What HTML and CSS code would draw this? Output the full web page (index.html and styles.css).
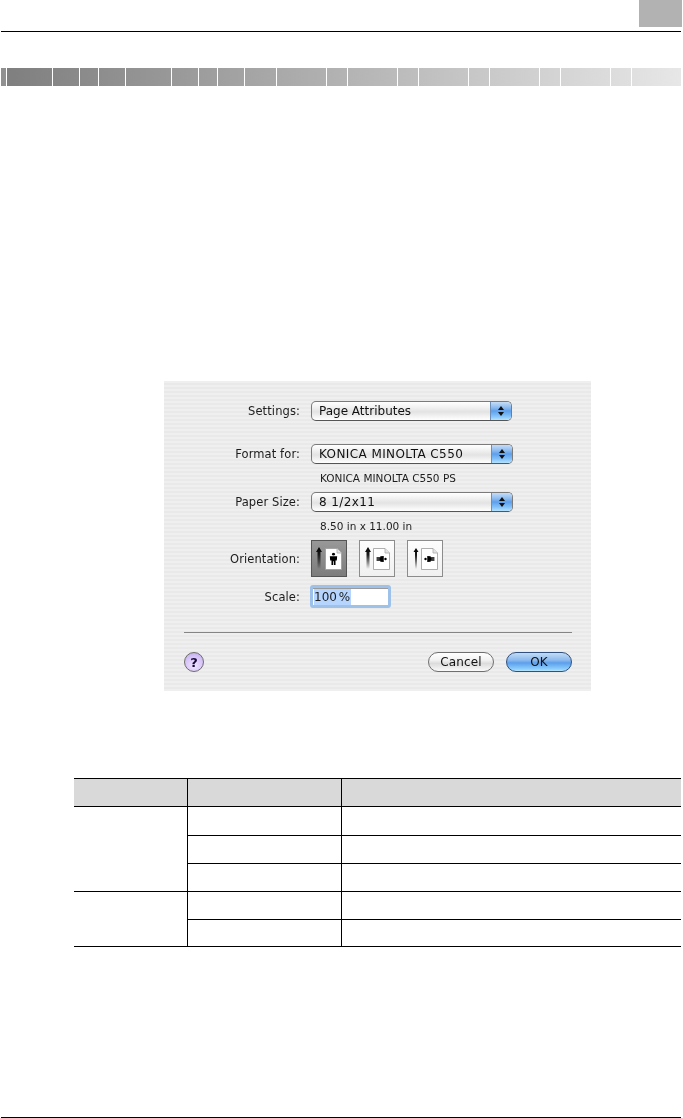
FILE: index.html

```html
<!DOCTYPE html>
<html lang="en">
<head>
  <meta charset="UTF-8">
  <meta name="viewport" content="width=device-width, initial-scale=1.0">
  <title>Page Attributes</title>
  <link rel="stylesheet" href="styles.css">
</head>
<body>
  <!-- shared shapes for the orientation buttons -->
  <svg class="defs" width="0" height="0" aria-hidden="true">
    <defs>
      <linearGradient id="arrow-fade" x1="0" y1="0" x2="0" y2="1">
        <stop offset="0" stop-color="#000"/>
        <stop offset="0.35" stop-color="#1a1a1a"/>
        <stop offset="1" stop-color="#000" stop-opacity="0"/>
      </linearGradient>
      <symbol id="page" viewBox="0 0 36 37">
        <path d="M14.5 8.5H26L30.5 13V29.5H14.5Z" fill="#fff" stroke="#9a9a9a" stroke-width="0.8"/>
        <path d="M26 8.5V13H30.5" fill="#e4e4e4" stroke="#a8a8a8" stroke-width="0.8"/>
      </symbol>
      <symbol id="person" viewBox="0 0 12 14">
        <circle cx="6" cy="1.7" r="1.6" fill="#000"/>
        <path d="M2 4H10L9.6 8.6H8.2V13.6H6.4V9.5H5.6V13.6H3.8V8.6H2.4Z" fill="#000"/>
      </symbol>
    </defs>
  </svg>

  <header class="top-head">
    <div class="chapter-tab"></div>
  </header>

  <!-- Stepped grey band -->
  <div class="band">
    <i></i><i></i><i></i><i></i><i></i><i></i><i></i>
    <i></i><i></i><i></i><i></i><i></i><i></i><i></i>
    <i></i><i></i><i></i><i></i><i></i><i></i><i></i>
  </div>

  <!-- Page setup dialog -->
  <div class="dialog">
    <div class="row row-settings">
      <span class="row-label">Settings:</span>
      <div class="popup popup-short">
        <span class="popup-text">Page Attributes</span>
        <span class="stepper"><b class="tri-up"></b><b class="tri-down"></b></span>
      </div>
    </div>

    <div class="row row-format">
      <span class="row-label">Format for:</span>
      <div class="popup">
        <span class="popup-text popup-caps">KONICA MINOLTA C550</span>
        <span class="stepper"><b class="tri-up"></b><b class="tri-down"></b></span>
      </div>
    </div>
    <p class="note">KONICA MINOLTA C550 PS</p>

    <div class="row">
      <span class="row-label">Paper Size:</span>
      <div class="popup">
        <span class="popup-text popup-caps">8 1/2x11</span>
        <span class="stepper"><b class="tri-up"></b><b class="tri-down"></b></span>
      </div>
    </div>
    <p class="note">8.50 in x 11.00 in</p>

    <div class="row">
      <span class="row-label">Orientation:</span>
      <div class="orient-group">
        <div class="orient orient-on">
          <svg viewBox="0 0 36 37" width="36" height="37">
            <path d="M8 7L11 12H9.5V29H6.5V12H5Z" fill="url(#arrow-fade)"/>
            <use href="#page" width="36" height="37"/>
            <use href="#person" x="17" y="12.5" width="11" height="13"/>
          </svg>
        </div>
        <div class="orient">
          <svg viewBox="0 0 36 37" width="36" height="37">
            <path d="M9 7L12 12H10.5V29H7.5V12H6Z" fill="url(#arrow-fade)"/>
            <use href="#page" width="36" height="37"/>
            <use href="#person" width="9" height="11" transform="translate(28 14.5) rotate(90)"/>
          </svg>
        </div>
        <div class="orient">
          <svg viewBox="0 0 36 37" width="36" height="37">
            <path d="M9 8L11.5 12H10V29H8V12H6.5Z" fill="url(#arrow-fade)"/>
            <use href="#page" width="36" height="37"/>
            <use href="#person" width="9" height="11" transform="translate(17 23.5) rotate(-90)"/>
          </svg>
        </div>
      </div>
    </div>

    <div class="row row-scale">
      <span class="row-label">Scale:</span>
      <div class="scale-field"><span class="scale-value">100 %</span></div>
    </div>

    <hr class="sep">

    <div class="dialog-foot">
      <span class="help">?</span>
      <div class="foot-buttons">
        <span class="pill">Cancel</span>
        <span class="pill pill-ok">OK</span>
      </div>
    </div>
  </div>

  <!-- Empty settings table -->
  <table class="spec">
    <colgroup>
      <col class="col-a"><col class="col-b"><col>
    </colgroup>
    <thead>
      <tr class="tr-head"><th></th><th></th><th></th></tr>
    </thead>
    <tbody>
      <tr class="tr-1"><td rowspan="3"></td><td></td><td></td></tr>
      <tr class="tr-2"><td></td><td></td></tr>
      <tr class="tr-3"><td></td><td></td></tr>
      <tr class="tr-4"><td rowspan="2"></td><td></td><td></td></tr>
      <tr class="tr-5"><td></td><td></td></tr>
    </tbody>
  </table>

  <footer class="bottom-line"></footer>
</body>
</html>
```

FILE: styles.css

```css
* {
  box-sizing: border-box;
}

html, body {
  height: 100%;
}

body {
  margin: 0;
  display: flex;
  flex-direction: column;
  min-height: 100vh;
  overflow: hidden;
  background: #fff;
  color: #1c1c1c;
  font-family: "DejaVu Sans", sans-serif;
}

.defs {
  position: absolute;
}

/* Header */
.top-head {
  display: flex;
  justify-content: flex-end;
  flex: none;
  height: 32px;
  margin: 0 2px 0 1px;
  border-bottom: 1px solid #000;
}

.chapter-tab {
  width: 43px;
  height: 27px;
  margin-right: -1px;
  background: #b2b2b2;
}

/* Band */
.band {
  display: grid;
  grid-template-columns: 6px 46px 27px 19px 27px 46px 27px 19px 27px 32px 50px 21px 50px 21px 50px 21px 50px 21px 50px 21px 49px;
  flex: none;
  width: 680px;
  height: 18px;
  margin: 36px 0 0 1px;
  background: linear-gradient(to right, #7e7e7e, #e7e7e7);
}

.band i {
  border-right: 1px solid #fff;
}

.band i:first-child {
  background: rgba(255, 255, 255, 0.14);
}

.band i:last-child {
  border-right: none;
}

/* Dialog */
.dialog {
  flex: none;
  width: 427px;
  height: 310px;
  margin: 295px 0 0 164px;
  padding-top: 20px;
  background: repeating-linear-gradient(to bottom, #efefef 0, #efefef 2px, #e9e9e9 2px, #e9e9e9 4px);
  font-size: 11.5px;
  letter-spacing: 0.1px;
  filter: blur(0.3px);
}

.row {
  display: flex;
  align-items: center;
}

.row-format {
  margin-top: 23px;
}

.row-scale {
  margin-top: 8px;
}

.row-label {
  width: 136px;
  margin-right: 11px;
  text-align: right;
}

.popup {
  display: flex;
  align-items: center;
  justify-content: space-between;
  width: 202px;
  height: 20px;
  padding-left: 7px;
  border: 1px solid #7b7b7b;
  border-bottom-color: #555;
  border-radius: 5px;
  background: linear-gradient(to bottom, #fff 0, #f1f1f1 30%, #e3e3e3 55%, #f6f6f6 85%, #fff 100%);
  overflow: hidden;
}

.popup-short {
  width: 201px;
}

.popup-text {
  font-size: 12px;
  letter-spacing: 0;
  color: #111;
}

.popup-caps {
  letter-spacing: 0.4px;
}

.stepper {
  display: flex;
  flex-direction: column;
  align-items: center;
  justify-content: center;
  gap: 2px;
  width: 21px;
  height: 100%;
  background: linear-gradient(to bottom, #c5ddf6 0, #8ebcf0 30%, #5e9fec 50%, #86c4fb 80%, #b5e3ff 100%);
  border-left: 1px solid #6d8fb8;
}

.tri-up,
.tri-down {
  width: 0;
  height: 0;
  border-left: 3px solid transparent;
  border-right: 3px solid transparent;
}

.tri-up {
  border-bottom: 4px solid #111;
}

.tri-down {
  border-top: 4px solid #111;
}

.note {
  height: 14px;
  margin: 7px 0 7px 147px;
  padding-left: 9px;
  font-size: 10.5px;
  line-height: 14px;
  letter-spacing: 0;
}

/* Orientation buttons */
.orient-group {
  display: flex;
  gap: 12px;
}

.orient {
  width: 36px;
  height: 37px;
  border: 1px solid #8c8c8c;
  background: linear-gradient(to bottom, #fdfdfd, #f0f0f0);
  overflow: hidden;
}

.orient svg {
  display: block;
  margin: -1px;
}

.orient-on {
  border-color: #555;
  background: linear-gradient(to bottom, #989898, #7c7c7c);
}

/* Scale field */
.scale-field {
  display: flex;
  align-items: center;
  width: 81px;
  height: 23px;
  margin-left: -1px;
  padding-left: 1px;
  border: 3px solid #9dc1e8;
  border-radius: 3px;
  background: #fff;
  box-shadow: inset 0 1px 0 #9a9a9a;
  font-size: 12px;
}

.scale-value {
  padding-right: 1px;
  background: #b5d5ff;
  line-height: 16px;
  letter-spacing: 0;
  word-spacing: -2px;
}

.sep {
  width: 388px;
  height: 1px;
  margin: 24px 0 0 20px;
  border: none;
  background: #858585;
}

.dialog-foot {
  display: flex;
  align-items: center;
  justify-content: space-between;
  width: 388px;
  margin: 19px 0 0 20px;
}

.help {
  display: flex;
  align-items: center;
  justify-content: center;
  width: 20px;
  height: 20px;
  border: 1px solid #6d6d6d;
  border-radius: 50%;
  background: radial-gradient(circle at 50% 70%, #f1e6ff 0, #d5c2f7 60%, #b8a3e4 100%);
  font-size: 13px;
  font-weight: bold;
  color: #17083a;
}

.foot-buttons {
  display: flex;
  gap: 12px;
}

.pill {
  display: flex;
  align-items: center;
  justify-content: center;
  width: 66px;
  height: 20px;
  border: 1px solid #6f6f6f;
  border-radius: 10px;
  background: linear-gradient(to bottom, #fff 0, #f2f2f2 40%, #dcdcdc 58%, #fafafa 100%);
  color: #111;
  font-size: 12px;
}

.pill-ok {
  border-color: #30507f;
  background: linear-gradient(to bottom, #c4dcf5 0, #8bb9ee 40%, #5c9fec 55%, #8ed0fd 90%, #b8e6ff 100%);
}

/* Table */
.spec {
  flex: none;
  width: 607px;
  margin: 87px 0 0 74px;
  border-collapse: collapse;
  table-layout: fixed;
}

.spec th,
.spec td {
  padding: 0;
  border-top: 1px solid #000;
  border-bottom: 1px solid #000;
  border-left: 1px solid #000;
}

.spec th:first-child,
.spec td[rowspan] {
  border-left: none;
}

.spec th {
  background: #d9d9d9;
}

.col-a {
  width: 113px;
}

.col-b {
  width: 154px;
}

.tr-head { height: 28px; }
.tr-1 { height: 29px; }
.tr-2 { height: 28px; }
.tr-3 { height: 28px; }
.tr-4 { height: 28px; }
.tr-5 { height: 27px; }

/* Bottom rule */
.bottom-line {
  flex: none;
  height: 1px;
  margin: auto 2px 0 1px;
  background: #000;
}
```
